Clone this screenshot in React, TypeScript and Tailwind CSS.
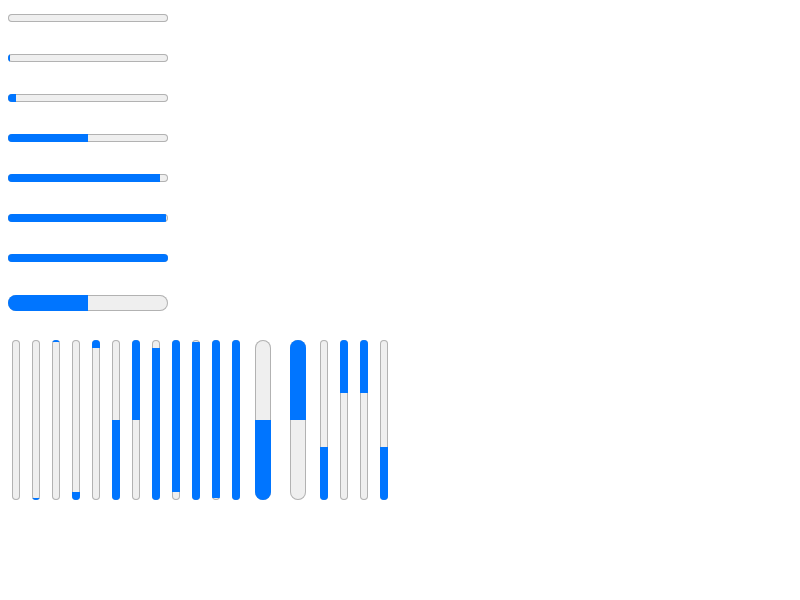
const horizontal = [0, 1, 5, 50, 95, 99, 100];

type VBar = { value: number; fromTop?: boolean; wide?: boolean; gap: number };

const vertical: VBar[] = [
  { value: 0, gap: 4 },
  { value: 1, gap: 12 },
  { value: 1, fromTop: true, gap: 12 },
  { value: 5, gap: 12 },
  { value: 5, fromTop: true, gap: 12 },
  { value: 50, gap: 12 },
  { value: 50, fromTop: true, gap: 12 },
  { value: 95, gap: 12 },
  { value: 95, fromTop: true, gap: 12 },
  { value: 99, gap: 12 },
  { value: 99, fromTop: true, gap: 12 },
  { value: 100, gap: 12 },
  { value: 50, wide: true, gap: 15 },
  { value: 50, fromTop: true, wide: true, gap: 19 },
  { value: 33, gap: 14 },
  { value: 33, fromTop: true, gap: 12 },
  { value: 33, fromTop: true, gap: 12 },
  { value: 33, gap: 12 },
];

function HBar({ value, tall }: { value: number; tall?: boolean }) {
  return (
    <div
      className={
        tall
          ? 'flex h-[16px] w-[160px] overflow-hidden rounded-full bg-[#efefef] shadow-[inset_0_0_0_1px_#b2b2b2]'
          : 'flex h-[8px] w-[160px] overflow-hidden rounded-full bg-[#efefef] shadow-[inset_0_0_0_1px_#b2b2b2]'
      }
    >
      <div className="h-full bg-[#0075ff]" style={{ width: `${value}%` }} />
    </div>
  );
}

function VertBar({ bar }: { bar: VBar }) {
  return (
    <div
      className={[
        'flex h-[160px] shrink-0 flex-col overflow-hidden rounded-full bg-[#efefef] shadow-[inset_0_0_0_1px_#b2b2b2]',
        bar.wide ? 'w-[16px]' : 'w-[8px]',
        bar.fromTop ? 'justify-start' : 'justify-end',
      ].join(' ')}
      style={{ marginLeft: bar.gap }}
    >
      <div className="w-full bg-[#0075ff]" style={{ height: `${bar.value}%` }} />
    </div>
  );
}

export default function App() {
  return (
    <div className="min-h-[600px] w-[800px] bg-white pl-[8px] pt-[14px]">
      <div className="flex flex-col gap-[32px]">
        {horizontal.map((v, i) => (
          <HBar key={i} value={v} />
        ))}
      </div>
      <div className="mt-[33px]">
        <HBar value={50} tall />
      </div>
      <div className="mt-[29px] flex items-start">
        {vertical.map((b, i) => (
          <VertBar key={i} bar={b} />
        ))}
      </div>
    </div>
  );
}
